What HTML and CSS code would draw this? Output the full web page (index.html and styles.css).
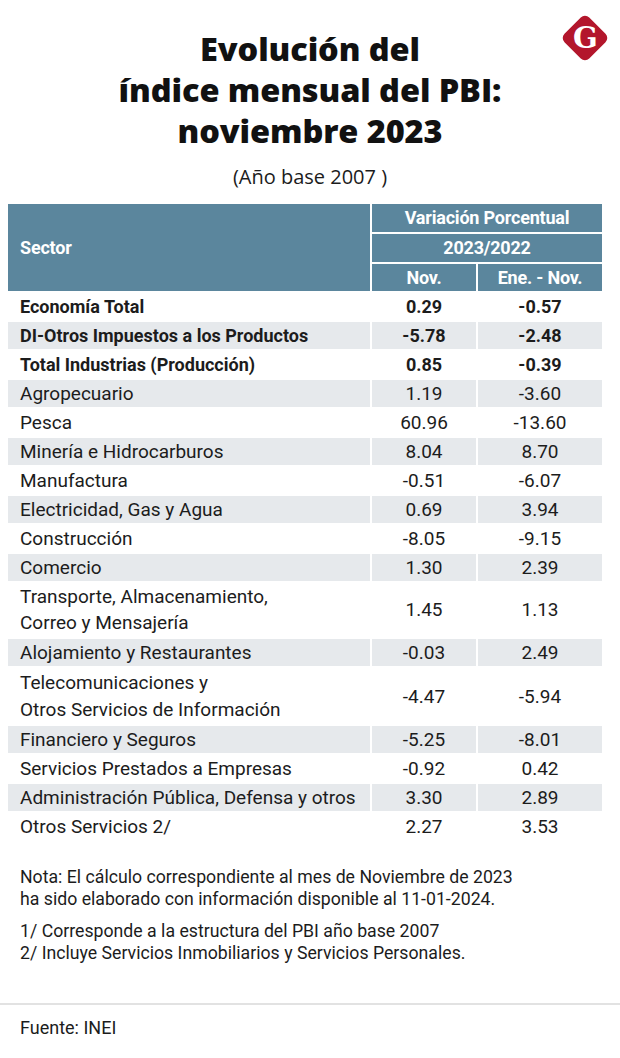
FILE: index.html
```html
<!DOCTYPE html>
<html lang="es">
<head>
<meta charset="utf-8">
<title>Evolución del índice mensual del PBI</title>
<link rel="stylesheet" href="styles.css">
</head>
<body>
<div class="page">
  <header class="head">
    <h1 class="title">Evolución del<br>índice mensual del PBI:<br>noviembre 2023</h1>
    <p class="subtitle">(Año base 2007 )</p>
    <svg class="logo" width="52" height="52" viewBox="0 0 52 52" aria-label="G">
      <rect x="8.5" y="8.5" width="35" height="35" rx="6" ry="6" transform="rotate(45 26 26)" fill="#b3162c"/>
      <text x="26.5" y="36" text-anchor="middle" class="logo-g">G</text>
    </svg>
  </header>

  <table class="data">
    <colgroup>
      <col class="c-sector"><col class="c-nov"><col class="c-ene">
    </colgroup>
    <thead>
      <tr><th rowspan="3" class="th-sector">Sector</th><th colspan="2">Variación Porcentual</th></tr>
      <tr><th colspan="2">2023/2022</th></tr>
      <tr><th>Nov.</th><th>Ene. - Nov.</th></tr>
    </thead>
    <tbody>
      <tr class="b"><td>Economía Total</td><td>0.29</td><td>-0.57</td></tr>
      <tr class="b g"><td>DI-Otros Impuestos a los Productos</td><td>-5.78</td><td>-2.48</td></tr>
      <tr class="b"><td>Total Industrias (Producción)</td><td>0.85</td><td>-0.39</td></tr>
      <tr class="g"><td>Agropecuario</td><td>1.19</td><td>-3.60</td></tr>
      <tr><td>Pesca</td><td>60.96</td><td>-13.60</td></tr>
      <tr class="g"><td>Minería e Hidrocarburos</td><td>8.04</td><td>8.70</td></tr>
      <tr><td>Manufactura</td><td>-0.51</td><td>-6.07</td></tr>
      <tr class="g"><td>Electricidad, Gas y Agua</td><td>0.69</td><td>3.94</td></tr>
      <tr><td>Construcción</td><td>-8.05</td><td>-9.15</td></tr>
      <tr class="g"><td>Comercio</td><td>1.30</td><td>2.39</td></tr>
      <tr class="two"><td>Transporte, Almacenamiento,<br>Correo y Mensajería</td><td>1.45</td><td>1.13</td></tr>
      <tr class="g"><td>Alojamiento y Restaurantes</td><td>-0.03</td><td>2.49</td></tr>
      <tr class="two tall"><td>Telecomunicaciones y<br>Otros Servicios de Información</td><td>-4.47</td><td>-5.94</td></tr>
      <tr class="g"><td>Financiero y Seguros</td><td>-5.25</td><td>-8.01</td></tr>
      <tr><td>Servicios Prestados a Empresas</td><td>-0.92</td><td>0.42</td></tr>
      <tr class="g"><td>Administración Pública, Defensa y otros</td><td>3.30</td><td>2.89</td></tr>
      <tr><td>Otros Servicios 2/</td><td>2.27</td><td>3.53</td></tr>
    </tbody>
  </table>

  <div class="notes">
    <p>Nota: El cálculo correspondiente al mes de Noviembre de 2023<br>ha sido elaborado con información disponible al 11-01-2024.</p>
    <p>1/ Corresponde a la estructura del PBI año base 2007<br>2/ Incluye Servicios Inmobiliarios y Servicios Personales.</p>
  </div>

  <footer class="foot">
    <p>Fuente: INEI</p>
  </footer>
</div>
</body>
</html>
```

FILE: styles.css
```css
* { box-sizing: border-box; }
html, body { margin: 0; padding: 0; background: #fff; }
body {
  font-family: Roboto, "Noto Sans", "Liberation Sans", sans-serif;
  color: #1c1c1c;
  width: 620px;
}
.page { width: 620px; }

.head {
  position: relative;
  padding-top: 28px;
  text-align: center;
}
.title {
  margin: 0;
  font-family: "Open Sans", "Noto Sans", sans-serif;
  font-weight: 800;
  font-size: 32.5px;
  line-height: 41px;
  letter-spacing: -0.1px;
  color: #111;
}
.subtitle {
  margin: 13px 0 0;
  font-family: "Open Sans", "Noto Sans", sans-serif;
  font-size: 20px;
  line-height: 26px;
  color: #1c1c1c;
}
.logo {
  position: absolute;
  top: 12px;
  right: 9px;
}
.logo-g {
  font-family: "DejaVu Serif", "Liberation Serif", serif;
  font-weight: 700;
  font-size: 29px;
  fill: #fff;
}

.data {
  margin: 12px 0 0 6px;
  border-collapse: separate;
  border-spacing: 2px;
  width: 598px;
  table-layout: fixed;
  font-size: 19px;
}
.c-sector { width: 362px; }
.c-nov { width: 104px; }
.c-ene { width: 124px; }

.data th {
  background: #5b869d;
  color: #fff;
  font-weight: 700;
  font-size: 18px;
  letter-spacing: -0.2px;
  height: 28px;
  padding: 0;
  text-align: center;
  line-height: 20px;
}
.data thead tr:nth-child(3) th { height: 27px; }
.data th.th-sector {
  text-align: left;
  padding-left: 12px;
}

.data td {
  height: 27px;
  padding: 0 4px;
  line-height: 26px;
  text-align: center;
  vertical-align: middle;
}
.data td:first-child {
  text-align: left;
  padding-left: 12px;
  white-space: nowrap;
}
.data tr.g td { background: #e6e9ec; }
.data tr.b td { font-weight: 700; font-size: 18px; }
.data tr.two td { height: 54px; }
.data tr.tall td { height: 56px; line-height: 27px; }

.notes {
  padding: 0 20px;
  margin-top: 24px;
  font-size: 17.7px;
  line-height: 22px;
}
.notes p { margin: 0 0 10px; }
.notes p:last-child { margin-bottom: 0; }

.foot {
  margin-top: 39px;
  border-top: 2px solid #e2e2e2;
  padding: 12px 20px 0;
  font-size: 18px;
  line-height: 22px;
}
.foot p { margin: 0; }
```
